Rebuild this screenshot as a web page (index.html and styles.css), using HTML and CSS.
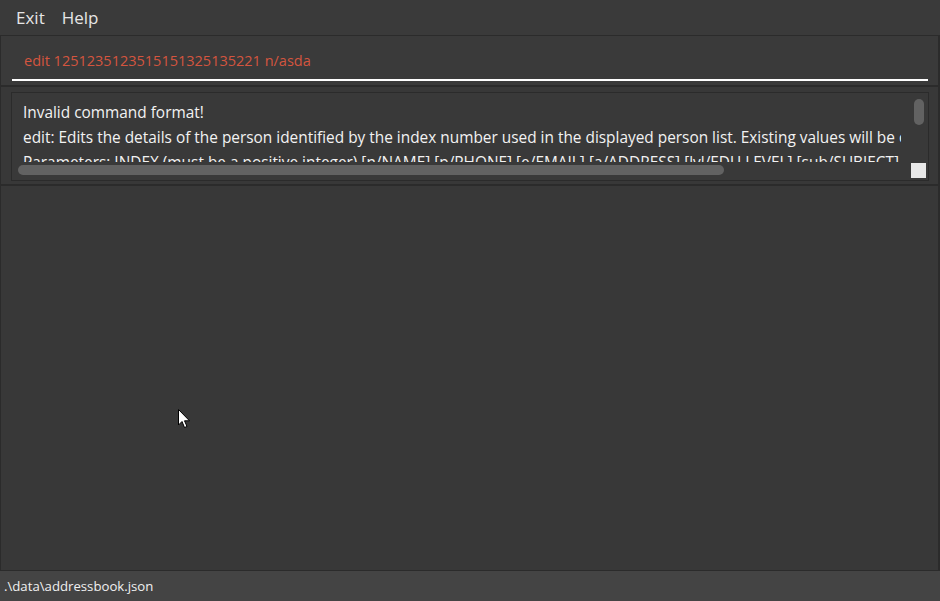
FILE: index.html
```html
<!DOCTYPE html>
<html>
<head>
<meta charset="utf-8">
<link rel="stylesheet" href="styles.css">
</head>
<body>
<div class="app">
  <div class="menubar">
    <span class="menu-item">Exit</span>
    <span class="menu-item">Help</span>
  </div>
  <div class="command-pane">
    <div class="command-field">edit 1251235123515151325135221 n/asda</div>
  </div>
  <div class="result-pane">
    <div class="result-box">
      <div class="result-text">
        <div class="line">Invalid command format!</div>
        <div class="line">edit: Edits the details of the person identified by the index number used in the displayed person list. Existing values will be overwritten by the input values.</div>
        <div class="line">Parameters: INDEX (must be a positive integer) [n/NAME] [p/PHONE] [e/EMAIL] [a/ADDRESS] [lvl/EDU LEVEL] [sub/SUBJECT]...</div>
      </div>
      <div class="hscroll"><div class="hthumb"></div></div>
      <div class="vscroll"><div class="vthumb"></div></div>
      <div class="corner"></div>
    </div>
  </div>
  <div class="list-pane"></div>
  <div class="statusbar">.\data\addressbook.json</div>
  <svg class="cursor" width="13" height="20" viewBox="0 0 13 20">
    <path d="M0.5 0.5 L0.5 16 L4 12.5 L6.5 18.5 L9 17.5 L6.5 11.8 L11.5 11.8 Z" fill="#fff" stroke="#000" stroke-width="1"/>
  </svg>
</div>
</body>
</html>
```
FILE: styles.css
```css
* { box-sizing: border-box; }
html, body { margin: 0; padding: 0; }
body {
  width: 940px;
  height: 601px;
  overflow: hidden;
  background: #383838;
  font-family: "Open Sans", "Noto Sans", sans-serif;
}
.app {
  position: relative;
  display: flex;
  flex-direction: column;
  height: 601px;
}
.menubar {
  height: 36px;
  background: #3a3a3a;
  border-bottom: 1px solid #2b2b2b;
  display: flex;
  align-items: center;
  padding-left: 16px;
  gap: 17px;
}
.menu-item {
  color: #e6e6e6;
  font-size: 17px;
  line-height: 20px;
}
.command-pane {
  height: 51px;
  background: #3a3a3a;
  border-left: 1px solid #2b2b2b;
  border-right: 2px solid #2b2b2b;
  border-bottom: 2px solid #2b2b2b;
  padding: 14px 10px 0 11px;
}
.command-field {
  height: 31px;
  border-bottom: 2px solid #ffffff;
  color: #d4553f;
  font-size: 14.5px;
  line-height: 22px;
  padding-left: 12px;
}
.result-pane {
  height: 99px;
  background: #383838;
  border-left: 1px solid #2b2b2b;
  border-right: 2px solid #2b2b2b;
  border-bottom: 2px solid #2b2b2b;
  padding: 5px 9px 4px 10px;
}
.result-box {
  position: relative;
  height: 89px;
  border: 1px solid #2b2b2b;
  background: #393939;
  overflow: hidden;
}
.result-text {
  padding: 7px 0 0 11px;
  color: #f2f2f2;
  font-size: 15.4px;
  line-height: 25px;
  white-space: nowrap;
  width: 889px;
  overflow: hidden;
  height: 69px;
}
.hscroll {
  position: absolute;
  left: 6px;
  top: 72px;
  width: 893px;
  height: 11px;
}
.hthumb {
  width: 706px;
  height: 10px;
  background: #626262;
  border-radius: 5px;
}
.vscroll {
  position: absolute;
  right: 4px;
  top: 6px;
  width: 10px;
  height: 60px;
}
.vthumb {
  width: 10px;
  height: 26px;
  background: #626262;
  border-radius: 5px;
}
.corner {
  position: absolute;
  right: 2px;
  bottom: 2px;
  width: 15px;
  height: 15px;
  background: #e8e8e8;
}
.list-pane {
  flex: 1;
  background: #383838;
  border-left: 1px solid #2b2b2b;
  border-right: 2px solid #2b2b2b;
  border-bottom: 1px solid #2b2b2b;
}
.statusbar {
  height: 30px;
  background: #444444;
  color: #f0f0f0;
  font-size: 13.2px;
  line-height: 31px;
  padding-left: 4px;
}
.cursor {
  position: absolute;
  left: 178px;
  top: 409px;
}
```
